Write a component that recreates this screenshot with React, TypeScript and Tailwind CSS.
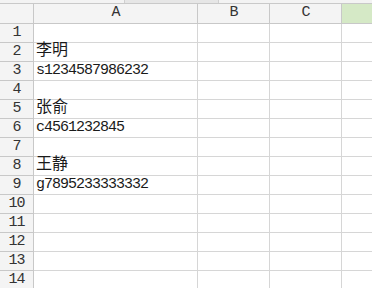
const cols = ["A", "B", "C", ""];

const cells: Record<number, string> = {
  2: "李明",
  3: "s1234587986232",
  5: "张俞",
  6: "c4561232845",
  8: "王静",
  9: "g7895233333332",
};

const font = {
  fontFamily: '"Liberation Mono", "Noto Sans CJK SC", monospace',
};

export default function App() {
  const rows = Array.from({ length: 14 }, (_, i) => i + 1);

  return (
    <div className="h-[288px] w-[372px] overflow-hidden bg-white text-[#1a1a1a]" style={font}>
      {/* bottom edge of the formula bar */}
      <div className="flex h-[4px] border-b border-[#c9c9c9] bg-[#f3f3f3]">
        <div className="w-[125px] border-r border-[#d0d0d0]" />
        <div className="w-[94px] border-r border-[#d0d0d0] bg-[#e6e6e6]" />
        <div className="flex-1" />
      </div>

      <div className="grid grid-cols-[34px_164px_72px_72px_1fr]">
        {/* column header */}
        <div className="h-[20px] border-b border-r border-[#c8c8c8] bg-[#f4f4f4]" />
        {cols.map((c, i) => (
          <div
            key={i}
            className={`flex h-[20px] items-center justify-center border-b border-[#c8c8c8] text-[15px] tracking-[-1px] text-[#333] ${
              i === 3 ? "bg-[#d5e9c6]" : "border-r bg-[#f4f4f4]"
            }`}
          >
            {c}
          </div>
        ))}

        {rows.map((r) => (
          <div key={r} className="contents">
            <div className="flex h-[19px] items-end justify-center border-b border-r border-[#c8c8c8] bg-[#f4f4f4] pb-[1px] text-[15px] leading-[17px] tracking-[-1px] text-[#333]">
              {r}
            </div>
            <div className="flex h-[19px] items-end whitespace-nowrap border-b border-r border-[#d6d6d6] pb-[1px] pl-[2px] text-[15px] leading-[17px] tracking-[-1px]">
              {cells[r] && /[a-z]/.test(cells[r]) ? (
                cells[r]
              ) : (
                <span className="text-[16px] tracking-normal">{cells[r]}</span>
              )}
            </div>
            <div className="h-[19px] border-b border-r border-[#d6d6d6]" />
            <div className="h-[19px] border-b border-r border-[#d6d6d6]" />
            <div className="h-[19px] border-b border-[#d6d6d6]" />
          </div>
        ))}
      </div>
    </div>
  );
}
